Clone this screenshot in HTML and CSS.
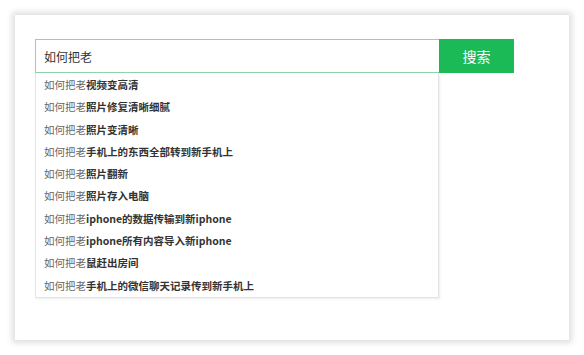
FILE: index.html
```html
<!DOCTYPE html>
<html lang="zh-CN">
<head>
    <meta charset="UTF-8">
    <meta name="viewport" content="width=device-width, initial-scale=1.0">
    <title>搜索</title>
    <link rel="stylesheet" href="styles.css">
</head>
<body>

<!-- 搜索框 -->
<div class="container">
    <div class="search">
        <div class="search-row">
            <input type="text" class="search-input" value="如何把老">
            <button class="search-btn">搜索</button>
        </div>
        <ul class="suggest">
            <li>如何把老<b>视频变高清</b></li>
            <li>如何把老<b>照片修复清晰细腻</b></li>
            <li>如何把老<b>照片变清晰</b></li>
            <li>如何把老<b>手机上的东西全部转到新手机上</b></li>
            <li>如何把老<b>照片翻新</b></li>
            <li>如何把老<b>照片存入电脑</b></li>
            <li>如何把老<b>iphone的数据传输到新iphone</b></li>
            <li>如何把老<b>iphone所有内容导入新iphone</b></li>
            <li>如何把老<b>鼠赶出房间</b></li>
            <li>如何把老<b>手机上的微信聊天记录传到新手机上</b></li>
        </ul>
    </div>
</div>

</body>
</html>
```

FILE: styles.css
```css
body {
    margin: 0;
    padding: 0;
    background-color: #fff;
    font-family: "Noto Sans CJK SC", "Liberation Sans", sans-serif;
}
.container {
    width: 554px;
    height: 325px;
    margin: 15px;
    box-sizing: border-box;
    padding: 24px 20px;
    background-color: #fff;
    box-shadow: 0 0 6px 3px rgba(0, 0, 0, 0.13);
}
.search {
    position: relative;
    width: 479px;
}
.search-row {
    display: flex;
    height: 34px;
}
.search-input {
    width: 404px;
    height: 34px;
    box-sizing: border-box;
    margin: 0;
    padding: 0 8px;
    border: 1px solid #8fd5a6;
    border-right: none;
    outline: none;
    font-family: "Noto Sans CJK SC", sans-serif;
    font-size: 12px;
    color: #333;
}
.search-btn {
    width: 75px;
    height: 34px;
    margin: 0;
    border: none;
    background-color: #1cb957;
    color: #fff;
    font-family: "Noto Sans CJK SC", sans-serif;
    font-size: 14px;
    cursor: pointer;
}
.suggest {
    position: absolute;
    top: 34px;
    left: 0;
    width: 404px;
    box-sizing: border-box;
    margin: 0;
    padding: 1px 0 0;
    list-style: none;
    background-color: #fff;
    border: 1px solid #e4e4e4;
    border-top: none;
    box-shadow: 1px 1px 2px rgba(0, 0, 0, 0.08);
}
.suggest li {
    height: 22.3px;
    line-height: 22.3px;
    padding-left: 8px;
    font-size: 10.5px;
    color: #666;
}
.suggest b {
    color: #333;
}
```
